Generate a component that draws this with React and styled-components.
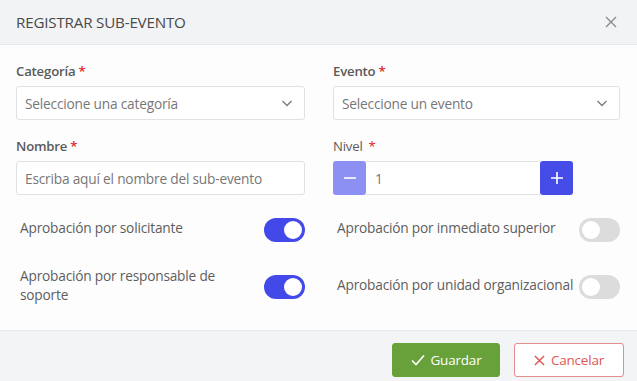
import styled, { createGlobalStyle } from 'styled-components';

const Global = createGlobalStyle`
  html, body { margin: 0; padding: 0; background: #fff; }
  body { font-family: 'Open Sans', 'Noto Sans', sans-serif; }
  * { box-sizing: border-box; }
`;

const Dialog = styled.div`
  width: 637px;
  height: 381px;
  display: flex;
  flex-direction: column;
  background: #fdfdfd;
  overflow: hidden;
`;

const Header = styled.div`
  height: 45px;
  flex: none;
  display: flex;
  align-items: center;
  justify-content: space-between;
  padding: 0 20px 0 16px;
  background: #f1f3f5;
  border-bottom: 1px solid #e6e8eb;
`;

const Title = styled.h1`
  margin: 0;
  font-size: 15.2px;
  font-weight: 500;
  color: #4a4a4a;
  letter-spacing: -0.2px;
`;

const Close = styled.button`
  border: 0;
  background: none;
  padding: 0;
  display: flex;
  color: #8a8a8a;
`;

const Body = styled.div`
  flex: 1;
  padding: 18px 17px 0 16px;
  display: grid;
  grid-template-columns: 289px 287px;
  column-gap: 28px;
  align-content: start;
`;

const Field = styled.div`
  display: flex;
  flex-direction: column;
  margin-bottom: ${(p) => p.mb || 18}px;
`;

const Label = styled.label`
  font-size: 13.2px;
  font-weight: ${(p) => (p.light ? 400 : 600)};
  color: #5a5a5a;
  line-height: 17px;
  margin-bottom: 6px;
  letter-spacing: -0.2px;
  span { color: #e02424; margin-left: ${(p) => (p.light ? 6 : 3)}px; }
`;

const Select = styled.div`
  height: 34px;
  border: 1px solid #dfe1e4;
  border-radius: 3px;
  background: #fff;
  display: flex;
  align-items: center;
  justify-content: space-between;
  padding: 0 10px 0 8px;
  font-size: 13.7px;
  color: #777;
  letter-spacing: -0.2px;
`;

const Input = styled(Select)``;

const Stepper = styled.div`
  display: flex;
  width: 240px;
  height: 34px;
`;

const StepBtn = styled.button`
  width: 33px;
  border: 0;
  padding: 0;
  border-radius: 3px;
  background: ${(p) => (p.light ? '#8b90f2' : '#454ce8')};
  color: #fff;
  display: flex;
  align-items: center;
  justify-content: center;
`;

const StepValue = styled.div`
  flex: 1;
  border-top: 1px solid #dfe1e4;
  border-bottom: 1px solid #dfe1e4;
  background: #fff;
  display: flex;
  align-items: center;
  padding-left: 9px;
  font-size: 13.7px;
  color: #777;
`;

const ToggleRow = styled.div`
  display: flex;
  align-items: center;
  justify-content: space-between;
  padding-left: 4px;
  height: ${(p) => p.h}px;
  margin-top: ${(p) => p.mt || 0}px;
`;

const ToggleText = styled.span`
  font-size: 13.7px;
  color: #5e5e5e;
  line-height: 19px;
  margin-bottom: 5px;
  max-width: ${(p) => p.max || 'none'};
  letter-spacing: -0.2px;
`;

const Switch = styled.div`
  flex: none;
  width: 41px;
  height: 24px;
  border-radius: 12px;
  background: ${(p) => (p.on ? '#4349e8' : '#dcdcdc')};
  position: relative;
  &::after {
    content: '';
    position: absolute;
    top: 3px;
    left: ${(p) => (p.on ? '20px' : '3px')};
    width: 18px;
    height: 18px;
    border-radius: 50%;
    background: #fff;
  }
`;

const Footer = styled.div`
  height: 51px;
  flex: none;
  background: #f3f4f6;
  border-top: 1px solid #e6e8eb;
  display: flex;
  justify-content: flex-end;
  align-items: flex-start;
  gap: 14px;
  padding: 12px 13px 0 0;
`;

const Button = styled.button`
  height: 34px;
  width: ${(p) => p.w}px;
  border-radius: 3px;
  display: flex;
  align-items: center;
  justify-content: center;
  gap: 6px;
  font-family: inherit;
  font-size: 13.5px;
  letter-spacing: -0.2px;
  background: ${(p) => (p.danger ? '#fff' : '#68a13a')};
  color: ${(p) => (p.danger ? '#df5656' : '#fff')};
  border: 1px solid ${(p) => (p.danger ? '#e48d8d' : '#68a13a')};
`;

const Chevron = () => (
  <svg width="14" height="14" viewBox="0 0 14 14" fill="none" stroke="#7a7a7a" strokeWidth="1.3">
    <path d="M2.5 5l4.5 4.5L11.5 5" />
  </svg>
);

const XIcon = ({ size = 12, color = 'currentColor', w = 1.5 }) => (
  <svg width={size} height={size} viewBox="0 0 12 12" fill="none" stroke={color} strokeWidth={w}>
    <path d="M1 1l10 10M11 1L1 11" />
  </svg>
);

export default function App() {
  return (
    <>
      <Global />
      <Dialog>
        <Header>
          <Title>REGISTRAR SUB-EVENTO</Title>
          <Close>
            <XIcon size={12} w={1.4} />
          </Close>
        </Header>
        <Body>
          <Field>
            <Label>Categoría<span>*</span></Label>
            <Select>Seleccione una categoría<Chevron /></Select>
          </Field>
          <Field>
            <Label>Evento<span>*</span></Label>
            <Select>Seleccione un evento<Chevron /></Select>
          </Field>
          <Field mb={20}>
            <Label>Nombre<span>*</span></Label>
            <Input>Escriba aquí el nombre del sub-evento</Input>
          </Field>
          <Field mb={20}>
            <Label light>Nivel<span>*</span></Label>
            <Stepper>
              <StepBtn light>
                <svg width="14" height="14" viewBox="0 0 14 14" stroke="#fff" strokeWidth="1.6">
                  <path d="M1 7h12" />
                </svg>
              </StepBtn>
              <StepValue>1</StepValue>
              <StepBtn>
                <svg width="14" height="14" viewBox="0 0 14 14" stroke="#fff" strokeWidth="1.6">
                  <path d="M1 7h12M7 1v12" />
                </svg>
              </StepBtn>
            </Stepper>
          </Field>
          <ToggleRow h={30}>
            <ToggleText>Aprobación por solicitante</ToggleText>
            <Switch on />
          </ToggleRow>
          <ToggleRow h={30}>
            <ToggleText>Aprobación por inmediato superior</ToggleText>
            <Switch />
          </ToggleRow>
          <ToggleRow h={56} mt={14}>
            <ToggleText max="215px">Aprobación por responsable de soporte</ToggleText>
            <Switch on />
          </ToggleRow>
          <ToggleRow h={56} mt={14}>
            <ToggleText>Aprobación por unidad organizacional</ToggleText>
            <Switch />
          </ToggleRow>
        </Body>
        <Footer>
          <Button w={108}>
            <svg width="14" height="12" viewBox="0 0 14 12" fill="none" stroke="#fff" strokeWidth="1.6">
              <path d="M1 6.5l4 4L13 1.5" />
            </svg>
            Guardar
          </Button>
          <Button danger w={110}>
            <XIcon size={11} color="#df5656" w={1.6} />
            Cancelar
          </Button>
        </Footer>
      </Dialog>
    </>
  );
}
